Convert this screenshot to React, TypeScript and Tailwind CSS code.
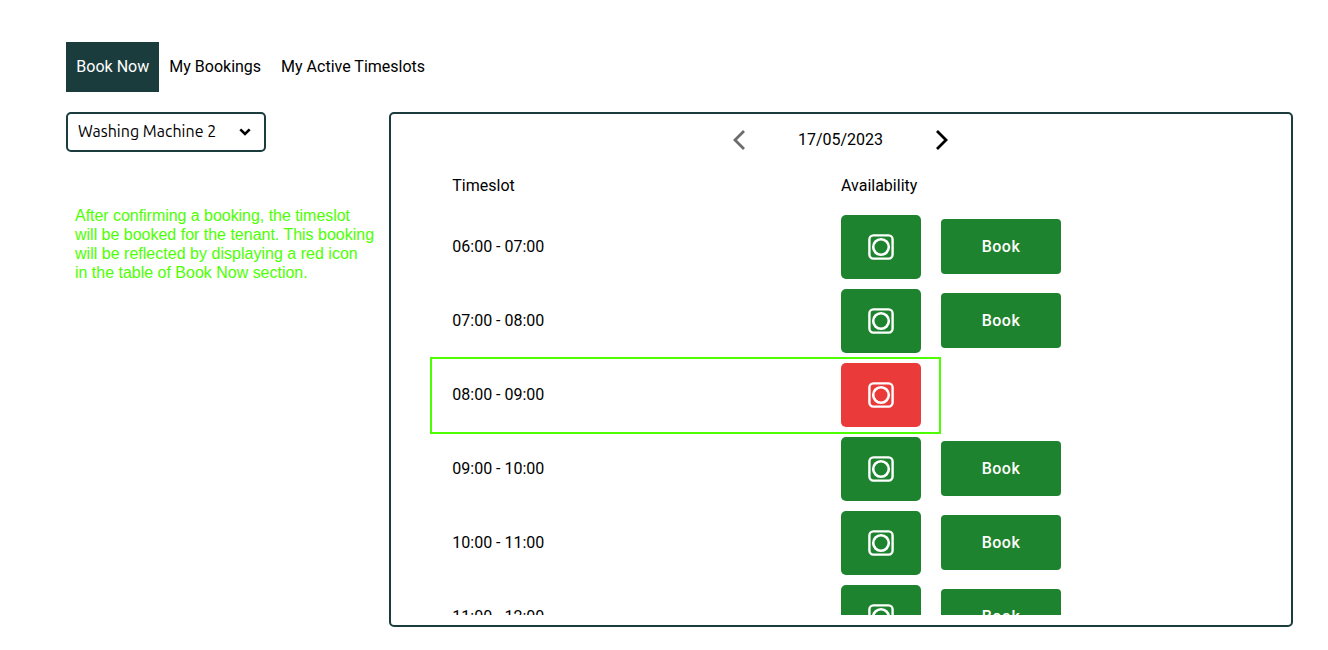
const slots = [
  { time: "06:00 - 07:00", free: true },
  { time: "07:00 - 08:00", free: true },
  { time: "08:00 - 09:00", free: false },
  { time: "09:00 - 10:00", free: true },
  { time: "10:00 - 11:00", free: true },
  { time: "11:00 - 12:00", free: true },
];

function WasherIcon() {
  return (
    <svg width="26" height="26" viewBox="0 0 26 26" fill="none" stroke="white" strokeWidth="2.4">
      <rect x="1.4" y="1.4" width="23.2" height="23.2" rx="4" />
      <circle cx="13" cy="13" r="7.8" strokeWidth="2.6" />
    </svg>
  );
}

function Chevron({ direction }: { direction: "left" | "right" }) {
  const left = direction === "left";
  return (
    <button type="button" aria-label={left ? "Previous day" : "Next day"} className={left ? "text-[#6b6b6b]" : "text-black"}>
      <svg width="14" height="20" viewBox="0 0 14 20" fill="none" stroke="currentColor" strokeWidth="2.8">
        <path d={left ? "M12 1 3 10l9 9" : "m2 1 9 9-9 9"} />
      </svg>
    </button>
  );
}

export default function App() {
  return (
    <div className="h-[650px] overflow-hidden bg-white pt-[42px] pl-[66px] font-['Roboto',sans-serif] text-base text-black">
      <nav className="flex h-[50px]">
        <button type="button" className="w-[93px] bg-[#1a3c3d] pl-[0.6px] text-white">Book Now</button>
        <button type="button" className="pr-[10px] pl-[10.3px]">My Bookings</button>
        <button type="button" className="px-[10px]">My Active Timeslots</button>
      </nav>
      <div className="mt-5 flex">
        <aside className="w-[323px] shrink-0">
          <button type="button" className="flex h-10 w-[200px] items-center justify-between rounded-[5px] border-2 border-[#1a3c3d] pr-[13px] pl-[10px] font-['Ubuntu','Noto_Sans',sans-serif]">
            <span className="-mt-[3px] tracking-[0.02px] whitespace-nowrap">Washing Machine 2</span>
            <svg width="12" height="8" viewBox="0 0 12 8" fill="none" stroke="currentColor" strokeWidth="2.6">
              <path d="m1.3 1.3 4.7 4.7 4.7-4.7" />
            </svg>
          </button>
          <p className="mt-[54px] ml-[9px] font-['Liberation_Sans',sans-serif] leading-[19px] tracking-[-0.01px] whitespace-nowrap text-[#4dff00]">
            <span className="tracking-[-0.04px]">After confirming a booking, the timeslot</span><br />
            will be booked for the tenant. This booking<br />
            <span className="tracking-[0.02px]">will be reflected by displaying a red icon</span><br />
            in the table of Book Now section.
          </p>
        </aside>
        <main className="h-[515px] w-[904px] overflow-hidden rounded-[5px] border-2 border-[#1a3c3d] pb-[10px]">
          <div className="flex h-[51px] items-center justify-center gap-[51.5px] pr-px">
            <Chevron direction="left" />
            <span>17/05/2023</span>
            <Chevron direction="right" />
          </div>
          <div className="flex h-[45px] items-center pb-1 pl-[61px]">
            <span className="w-[389px] pl-[0.3px]">Timeslot</span>
            <span>Availability</span>
          </div>
          <div className="h-[405px] overflow-hidden">
            {slots.map((slot) => (
              <div key={slot.time} className="relative flex h-[74px] items-center pl-[61px]">
                <span className="w-[389px] pl-[0.3px]">{slot.time}</span>
                <div className={`flex h-16 w-20 items-center justify-center rounded-[5px] ${slot.free ? "bg-[#1e832e]" : "bg-[#eb3a3a]"}`}>
                  <WasherIcon />
                </div>
                {slot.free ? (
                  <button type="button" className="mb-px ml-5 h-[55px] w-[120px] rounded-[4px] bg-[#1e832e] pt-px font-medium tracking-[0.5px] text-white">Book</button>
                ) : (
                  <div className="absolute -top-px left-[39px] h-[77px] w-[511px] border-2 border-[#4dff00]" />
                )}
              </div>
            ))}
          </div>
        </main>
      </div>
    </div>
  );
}
